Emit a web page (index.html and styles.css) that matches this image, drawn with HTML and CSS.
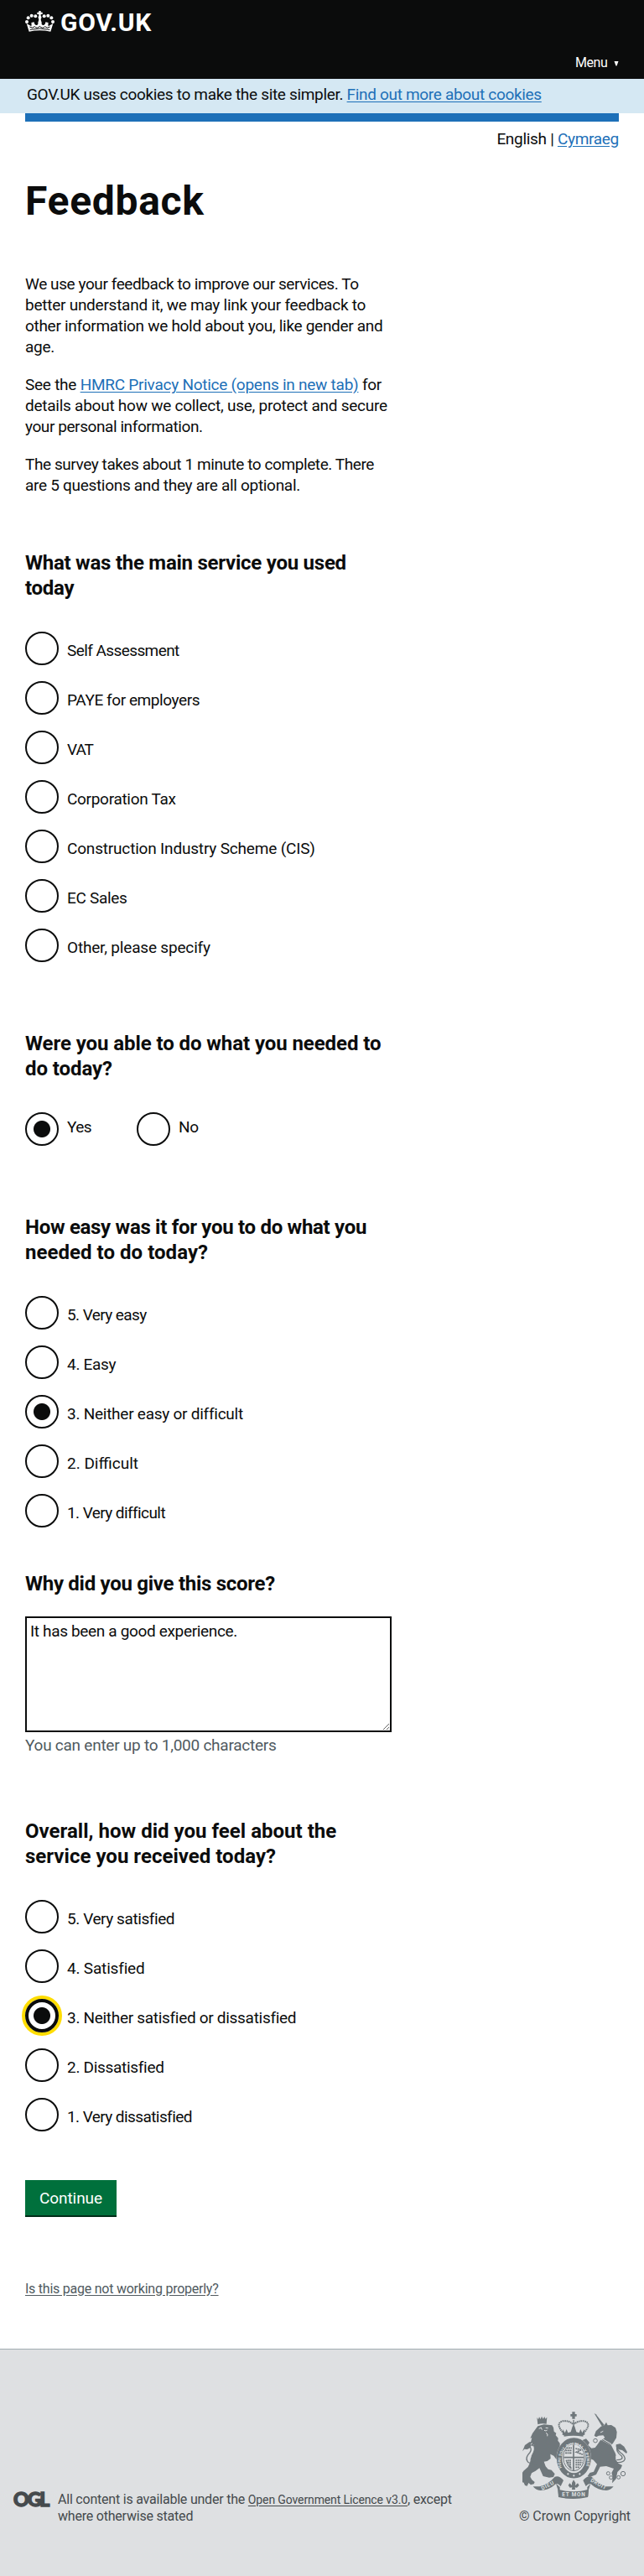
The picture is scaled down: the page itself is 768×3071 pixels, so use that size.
FILE: index.html
```
<!DOCTYPE html>
<html lang="en">
<head>
<meta charset="utf-8">
<title>Feedback - GOV.UK</title>
<link rel="stylesheet" href="styles.css">
</head>
<body>
<header class="header">
  <a class="logo" href="#">
    <svg class="crown" viewBox="0 0 105 78" aria-hidden="true">
      <g fill="currentColor">
        <path d="M14 74 L5 45 L22 55 Q24 49 22 42 L32 40 Q33 52 42 51 Q48 49 46 41 Q50 33 49 26 L56 26 Q55 33 59 41 Q57 49 63 51 Q72 52 73 40 L83 42 Q81 49 83 55 L100 45 L91 74 Q52 66 14 74Z"/>
        <circle cx="6" cy="39" r="6"/><circle cx="11" cy="25" r="6"/><circle cx="23" cy="17" r="6"/><circle cx="37" cy="19" r="6"/>
        <circle cx="99" cy="39" r="6"/><circle cx="94" cy="25" r="6"/><circle cx="82" cy="17" r="6"/><circle cx="68" cy="19" r="6"/>
        <circle cx="52.500" cy="23" r="6"/><path d="M49 0h7v5h6v7h-6v8h-7v-8h-6V5h6z"/>
      </g>
      <path d="M16 57 Q27 64 34 56 Q43 65 52 55 Q62 65 71 56 Q78 64 89 57 M17 67 Q52 59 88 67" fill="none" stroke="#0b0c0c" stroke-width="3"/>
    </svg>
    <span>GOV.UK</span>
  </a>
  <a class="menu" href="#">Menu <svg viewBox="0 0 6 6" aria-hidden="true"><path d="M0.500 0h5L3.500 5.500h-1z" fill="currentColor"/></svg></a>
</header>
<div class="cookie">GOV.UK uses cookies to make the site simpler. <a href="#">Find out more about cookies</a></div>

<main class="main">
  <div class="bar"></div>
  <p class="language">English | <a href="#">Cymraeg</a></p>
  <div class="column">
    <h1>Feedback</h1>
    <p><span class="tight">We use your feedback to improve our services. To</span><br><span class="loose">better understand it, we may link your feedback to</span><br>other information we hold about you, like gender and<br>age.</p>
    <p class="loose">See the <a href="#">HMRC Privacy Notice (opens in new tab)</a> for<br>details about how we collect, use, protect and secure<br><span class="tight">your personal information.</span></p>
    <p><span class="tight">The survey takes about 1 minute to complete. There</span><br>are 5 questions and they are all optional.</p>

    <form>
      <h2 class="first tight">What was the main service you used<br>today</h2>
      <div class="radios">
        <label class="radio tighter"><input type="radio" name="service">Self Assessment</label>
        <label class="radio tight"><input type="radio" name="service">PAYE for employers</label>
        <label class="radio vat"><input type="radio" name="service">VAT</label>
        <label class="radio"><input type="radio" name="service">Corporation Tax</label>
        <label class="radio looser"><input type="radio" name="service">Construction Industry Scheme (CIS)</label>
        <label class="radio"><input type="radio" name="service">EC Sales</label>
        <label class="radio looser"><input type="radio" name="service">Other, please specify</label>
      </div>

      <h2>Were you able to do what you needed to<br>do today?</h2>
      <div class="radios inline">
        <label class="radio tighter"><input type="radio" name="able" checked>Yes</label>
        <label class="radio"><input type="radio" name="able">No</label>
      </div>

      <h2><span class="tight">How easy was it for you to do what you</span><br><span class="plain">needed to do today?</span></h2>
      <div class="radios">
        <label class="radio tighter"><input type="radio" name="easy">5. Very easy</label>
        <label class="radio"><input type="radio" name="easy">4. Easy</label>
        <label class="radio loose"><input type="radio" name="easy" checked>3. Neither easy or difficult</label>
        <label class="radio plain"><input type="radio" name="easy">2. Difficult</label>
        <label class="radio tighter"><input type="radio" name="easy">1. Very difficult</label>
      </div>

      <h2 class="why tight"><label for="reason">Why did you give this score?</label></h2>
      <textarea id="reason">It has been a good experience.</textarea>
      <p class="hint loose">You can enter up to 1,000 characters</p>

      <h2 class="overall plain">Overall, how did you feel about the<br>service you received today?</h2>
      <div class="radios">
        <label class="radio tight"><input type="radio" name="overall">5. Very satisfied</label>
        <label class="radio looser"><input type="radio" name="overall">4. Satisfied</label>
        <label class="radio"><input class="focused" type="radio" name="overall" checked>3. Neither satisfied or dissatisfied</label>
        <label class="radio"><input type="radio" name="overall">2. Dissatisfied</label>
        <label class="radio tighter"><input type="radio" name="overall">1. Very dissatisfied</label>
      </div>
      <button class="button" type="button">Continue</button>
    </form>
    <a class="problem" href="#">Is this page not working properly?</a>
  </div>
</main>

<footer class="footer">
  <span class="ogl">OGL</span>
  <p class="licence">All content is available under the <a href="#">Open Government Licence v3.0</a>, except<br>where otherwise stated</p>
  <div class="copyright">
    <svg class="arms" viewBox="39 45 375 312" aria-hidden="true">
      <g fill="currentColor">
        <!-- central crown -->
        <path d="M217 46h10v8h6v8h-6v9h-10v-9h-6v-8h6z"/>
        <path d="M184 108l7 13 6-13 5 13 10-3 6-20 4-5 4 5 6 20 10 3 5-13 6 13 7-13 2 21q-40-6-80 0z"/>
        <path d="M186 125q36-7 72 0l-2 9q-35-5-68 0z"/>
        <!-- lion -->
        <path d="M91 66l5 7 3-9 5 8 4-10 5 9 5-8 3 8 6-6-2 24q-17-4-31 2z"/>
        <path d="M94 97l22-6 29 3 5 8 2 14 8 6-2 8 9 10-1 9 7 9 0 10 6 12-4 14-9 4 0 14-6 3-9-12-12-6 1 16-12 9-12 2 6 17 9 10 12 3 12 14-5 11-15 2-22-5-13-29-14 10-14 8-5 13 6 11 10 8-3 7-11 3-8-7-5 11-8-2-4-10-8-2 2-14-5-10 10-16 16-14 12-26 0-14 12-24-3-16-8 7 2-14-6 2 5-20-6 3 8-18z"/>
        <path d="M39 187l9-22 16-11 13-1-9 9 1 11-13 7-10-1z"/>
        <!-- unicorn -->
        <path d="M296 51l6 4 30 38-8 5z"/>
        <path d="M339 83l5 11 13-1 15 10 5 15-2 21-13 21-7 4-33-17 12-9-6-8-16 1-9 5-7-5 6-16 18-17 12-4z"/>
        <path d="M319 146l38 20 15 29 1 22 9 13 14 7-5 12-12 12-5 25-14 15 2-22-4-15 8-15-27-9-22 2-14 28-22 9-9-3 8-12 14-4 12-27-13-15-14-6-6-13-21-16-4-14-9-4 6-10 10 3-1-11 13-5 12 14-5 9 12 11 13-2 7-9z"/>
        <path d="M374 163l15-3 14 10 11 20-3 5-15-12-12-2-10-9z"/>
        <!-- motto scrolls -->
        <path d="M77 313l23 0q33-9 55-35 17-5 31 13l-10 21q-14-16-23-4-20 18-50 19-17-2-26-14z"/>
        <path d="M365 313l-23 0q-33-9-55-35-17-5-31 13l10 21q14-16 23-4 20 18 50 19 17-2 26-14z"/>
        <path d="M159 302l14 13v14q50 10 98 0v-14l12-13-8 25-2 24q-52 12-105 0l-2-26z"/>
        <path d="M166 323q56 15 110 0l-2 26q-52 13-105 1z"/>
        <path d="M222 289l7 11-1 9 9-8 5 8-8 8-7-1 1 8h-12l1-8-8 1-6-8 5-8 8 8v-9z"/>
      </g>
      <path d="M98 106l8-4 3 8M122 103l9 1M117 112l6 2 5-3M123 121l6 5-1 7M318 120l10-5M326 143l31 18" fill="none" stroke="#dee0e2" stroke-width="3"/>
      <g fill="none" stroke="currentColor">
        <path d="M188 124q-34-36-5-45 24-2 34 9h10q10-11 34-9 29 9-5 45" stroke-width="6" stroke-dasharray="5 2"/>
        <path d="M222 75v32" stroke-width="4"/>
        <path d="M89 235q-24-1-19-21 15-26 12-41-4-16-20-4M85 224q-22 12-29-3-7-13 10-30 8-12-1-22" stroke-width="4"/>
        <path d="M371 226q30 4 35-12-1-12-16-22-19-15-5-29M376 218q26 0 18-14-24-17-15-35" stroke-width="4"/>
        <g stroke-width="3"><circle cx="300" cy="149" r="7"/><circle cx="298" cy="187" r="6"/><circle cx="367" cy="201" r="5"/><circle cx="364" cy="230" r="5"/><circle cx="346" cy="266" r="6"/><circle cx="356" cy="281" r="6"/><circle cx="383" cy="280" r="6"/><circle cx="399" cy="267" r="8"/></g>
      </g>
      <!-- garter and shield -->
      <ellipse cx="223" cy="211" rx="62" ry="73" fill="#dee0e2"/>
      <ellipse cx="223" cy="211" rx="52" ry="63" fill="none" stroke="currentColor" stroke-width="19"/>
      <ellipse cx="223" cy="209" rx="38" ry="48" fill="none" stroke="currentColor" stroke-width="3"/>
      <path d="M222 163v94M187 209h72" stroke="currentColor" stroke-width="5"/>
      <path d="M193 184h23M192 193h24M197 175h19M229 177l21 5-18 8 24 9M196 218q4 22 20 31M203 217v21M210 217v31M229 219h25M229 227h25M229 235h20M229 244h14" fill="none" stroke="currentColor" stroke-width="5" stroke-dasharray="6 1.500"/>
      <path id="garter" d="M180 246A47 57 0 1 1 267 242" fill="none"/>
      <text class="garter-text"><textPath href="#garter" textLength="205">HONI SOIT QUI MAL Y PENSE</textPath></text>
      <path d="M198 268l4-4 4 4-4 4zM219 274l4-4 4 4-4 4zM240 268l4-4 4 4-4 4z" fill="#dee0e2"/>
      <text class="motto" x="110" y="326" transform="rotate(-27 110 326)" textLength="48">DIEU</text>
      <text class="motto" x="181" y="348" textLength="82">ET MON</text>
      <text class="motto" x="281" y="295" transform="rotate(28 281 295)" textLength="61">DROIT</text>
    </svg>
    <a href="#">© Crown Copyright</a>
  </div>
</footer>
</body>
</html>
```
FILE: styles.css
```
* { box-sizing: border-box; }
body { margin: 0; background: #fff; color: #0b0c0c; font: 19px/25px Roboto, "Liberation Sans", sans-serif; letter-spacing: -0.3px; }
h1, h2, p { margin: 0; }
a { color: #1d70b8; text-underline-offset: 2px; }

.tighter { letter-spacing: -0.58px; }
.tight { letter-spacing: -0.42px; }
.loose { letter-spacing: -0.25px; }
.looser { letter-spacing: -0.18px; }
.plain { letter-spacing: 0; }

.header { display: flex; flex-direction: column; justify-content: space-between; height: 94px; padding: 12px 30px 9px; background: #0b0c0c; color: #fff; }
.header a { color: #fff; text-decoration: none; }
.logo { display: flex; gap: 7px; font-size: 30px; line-height: 29px; font-weight: 700; letter-spacing: .7px; }
.crown { width: 35px; height: 26px; margin-top: 1px; }
.menu { align-self: flex-end; font-size: 16px; line-height: 20px; letter-spacing: -.4px; }
.menu svg { width: 6px; height: 6px; margin-left: 4px; vertical-align: 1px; }

.cookie { height: 41px; padding: 6px 32px; background: #d5e8f3; letter-spacing: -.32px; }

.main { padding: 0 30px; }
.bar { height: 10px; background: #1d70b8; }
.language { padding-top: 8px; text-align: right; }
.column { width: 437px; white-space: nowrap; }
h1 { margin: 37px 0 61px; font-size: 48px; line-height: 50px; letter-spacing: .7px; }
.column p + p { margin-top: 20px; }

h2 { margin: 82px 0 37px; font-size: 24px; line-height: 30px; letter-spacing: -.08px; }
h2.first { margin-top: 65px; letter-spacing: -.25px; }
h2.why { margin: 52px 0 24px; letter-spacing: -.28px; }
h2.overall { margin-top: 75px; letter-spacing: .02px; }
h2 .tight { letter-spacing: -.3px; }
h2 .plain { letter-spacing: .04px; }

.radios { display: grid; gap: 19px; }
.radio { display: flex; gap: 10px; height: 40px; line-height: 45px; }
.vat { letter-spacing: -1px; }
.inline { grid-template-columns: 133px 1fr; gap: 0; }
.inline .radio { line-height: 35px; }
.radio input { appearance: none; width: 40px; height: 40px; margin: 0; border: 2px solid #0b0c0c; border-radius: 50%; background: #fff; }
.radio input:checked { background: radial-gradient(circle, #0b0c0c 9.500px, #fff 10.500px); }
.radio .focused { border-width: 4px; box-shadow: 0 0 0 4px #fd0; }

textarea { display: block; width: 437px; height: 138px; padding: 3px 5px 5px 4px; border: 2px solid #0b0c0c; border-radius: 0; background: #fff; color: #0b0c0c; font: inherit; letter-spacing: -.34px; resize: vertical; }
.hint { padding-top: 3px; color: #505a5f; }

.button { display: block; width: 109px; height: 42px; margin: 58px 0 78px; padding: 0; border: 0; background: #00703c; box-shadow: 0 2px 0 #002d18; color: #fff; font: inherit; letter-spacing: -.07px; }
.problem { display: block; font-size: 16px; line-height: 20px; color: #505a5f; letter-spacing: -.24px; }

.footer { display: flex; align-items: flex-end; height: 271px; margin-top: 61px; padding: 0 16px 61px; border-top: 1px solid #a1acb2; background: #dee0e2; color: #454a4d; font-size: 16px; line-height: 20px; letter-spacing: -.21px; white-space: nowrap; }
.ogl { width: 53px; margin-bottom: 21px; font: 900 23px/20px Lato, sans-serif; letter-spacing: -2px; -webkit-text-stroke: 1.400px #454a4d; }
.licence a { color: inherit; font-size: 14px; letter-spacing: -.12px; }
.copyright { display: flex; flex-direction: column; align-items: flex-end; gap: 11px; margin-left: auto; }
.copyright a { color: inherit; text-decoration: none; letter-spacing: -.09px; }
.arms { width: 125px; height: 104px; margin-right: 4px; color: #6f777b; }
.garter-text { fill: #dee0e2; font-size: 14px; font-weight: 700; letter-spacing: 0; }
.motto { fill: #dee0e2; font-size: 19px; font-weight: 700; letter-spacing: 0; }
```
